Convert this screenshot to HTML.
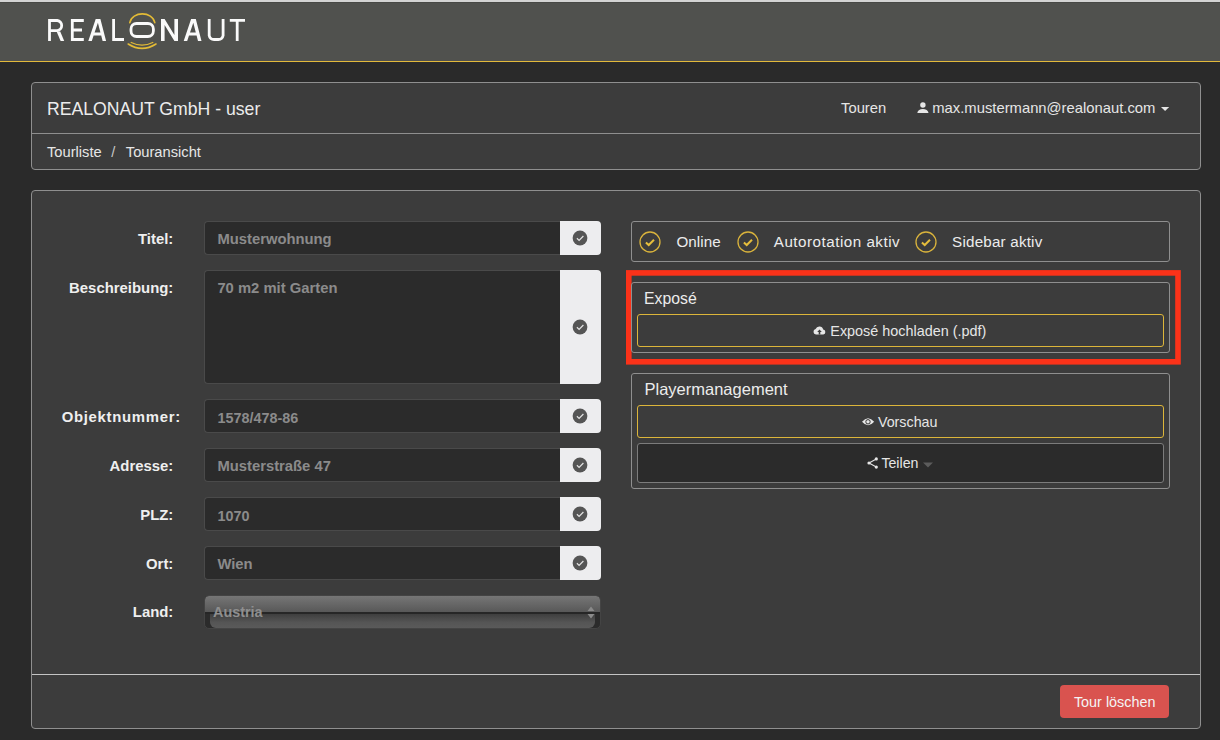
<!DOCTYPE html>
<html><head><meta charset="utf-8">
<style>
html,body{margin:0;padding:0;}
body{width:1220px;height:740px;overflow:hidden;background:#2a2a2a;position:relative;font-family:"Liberation Sans",sans-serif;}
.t{position:absolute;white-space:nowrap;}
.b{position:absolute;box-sizing:border-box;}
svg{position:absolute;overflow:visible;}
</style></head><body>
<div class="b" style="left:0px;top:0px;width:1220px;height:2px;background:#d3d3d3;"></div>
<div class="b" style="left:0px;top:2px;width:1220px;height:59px;background:#50514e;border-top:1px solid #474845;"></div>
<div class="b" style="left:0px;top:61px;width:1220px;height:1px;background:#e2b93b;"></div>
<svg width="1220" height="62" style="left:0;top:0" viewBox="0 0 1220 62">
<g fill="none" stroke="#fafafa" stroke-width="2.8" stroke-linejoin="miter" stroke-linecap="butt">
<path d="M49.5 41V20.5H57.3A5.1 5.1 0 0 1 57.3 30.6H49.5"/>
<path d="M72.3 41V20.5H83.8M72.3 30H82M72.3 39.5H83.8"/>

<path d="M113.6 19V39.5H124"/>
<rect x="131" y="23.5" width="22.4" height="13" rx="5.5" ry="5.5"/>


<path d="M209.2 19V35.5A5 5 0 0 0 214.2 39.5H218A5 5 0 0 0 223.1 35.5V19"/>
<path d="M229.8 20.4H245M237.2 20.4V41"/>
</g>
<g fill="#fafafa" fill-rule="evenodd">
<path d="M161 41V19H164.6L174.4 35.1V19H178V41H174.4L164.6 24.9V41Z"/>
<path d="M56.6 31.6H60.2L64.2 41H60.6Z"/>
<path d="M88.3 41L95.7 19H100.4L106.1 41H102.6L101.2 35.6H93.6L91.8 41ZM94.6 32.6H100.4L97.9 22.85Z"/>
<path transform="translate(95.4 0)" d="M88.3 41L95.7 19H100.4L106.1 41H102.6L101.2 35.6H93.6L91.8 41ZM94.6 32.6H100.4L97.9 22.85Z"/>
</g>
<g fill="none" stroke="#e3bb36" stroke-linecap="round">
<path d="M129.8 22.6C132 11 152.6 11 154.8 22.6" stroke-width="1.6"/>
<path d="M128.2 44Q142 52.8 156 44" stroke-width="1.6"/>
<path d="M131.2 42.5Q142 47.7 152.8 42.5" stroke-width="1.3"/>
</g>
</svg>
<div class="b" style="left:31px;top:82px;width:1170px;height:88px;background:#3c3c3c;border:1px solid #8f8f8f;border-radius:4px;"></div>
<div class="b" style="left:32px;top:133px;width:1168px;height:1px;background:#8f8f8f;"></div>
<div class="t" style="top:99.01px;font-size:19px;line-height:19px;color:#ececec;left:47.2px;transform:scaleX(0.928);transform-origin:0 0;">REALONAUT GmbH - user</div>
<div class="t" style="top:144.55px;font-size:14.7px;line-height:14.7px;color:#e6e6e6;left:47px;">Tourliste</div>
<div class="t" style="top:144.55px;font-size:14.7px;line-height:14.7px;color:#c8c8c8;left:111.3px;">/</div>
<div class="t" style="top:144.55px;font-size:14.7px;line-height:14.7px;color:#e6e6e6;left:125.8px;">Touransicht</div>
<div class="t" style="top:101.47px;font-size:14.8px;line-height:14.8px;color:#e6e6e6;left:841px;">Touren</div>
<svg width="12" height="12" style="left:916.6px;top:102px" viewBox="0 0 12 12"><circle cx="5.9" cy="3" r="2.7" fill="#e6e6e6"/><path d="M0.3 11.1C0.6 8.3 3 7 5.9 7S11.2 8.3 11.5 11.1Z" fill="#e6e6e6"/></svg>
<div class="t" style="top:101.47px;font-size:14.8px;line-height:14.8px;color:#e6e6e6;left:932.3px;">max.mustermann@realonaut.com</div>
<svg width="9" height="5" style="left:1160.9px;top:106.9px" viewBox="0 0 9 5"><path d="M0 0H8.2L4.1 4.1Z" fill="#e6e6e6"/></svg>
<div class="b" style="left:31px;top:190px;width:1170px;height:539px;background:#3c3c3c;border:1px solid #8f8f8f;border-radius:4px;"></div>
<div class="b" style="left:32px;top:674px;width:1168px;height:1px;background:#c4c4c4;"></div>
<div class="t" style="top:232.08px;font-size:14.9px;line-height:14.9px;color:#efefef;font-weight:bold;right:1046.7px;text-align:right;">Titel:</div>
<div class="b" style="left:204px;top:221px;width:367px;height:34px;background:#2b2b2b;border:1px solid #4a4a4a;border-radius:4px 0 0 4px;border-right:none;"></div>
<div class="b" style="left:560px;top:221px;width:41px;height:34px;background:#ededef;border-radius:0 4px 4px 0;"></div>
<svg width="16" height="16" style="left:571.5px;top:229.8px" viewBox="0 0 16 16"><circle cx="8" cy="8" r="7.4" fill="#555"/><path d="M4.9 8.3L7.1 10.4L11.4 6" fill="none" stroke="#e4e4e4" stroke-width="1.2"/></svg>
<div class="t" style="top:232.27px;font-size:14.8px;line-height:14.8px;color:#8b8b8b;font-weight:bold;left:217.4px;">Musterwohnung</div>
<div class="t" style="top:281.08px;font-size:14.9px;line-height:14.9px;color:#efefef;font-weight:bold;right:1046.7px;text-align:right;">Beschreibung:</div>
<div class="b" style="left:204px;top:270px;width:367px;height:114px;background:#2b2b2b;border:1px solid #4a4a4a;border-radius:4px 0 0 4px;border-right:none;"></div>
<div class="b" style="left:560px;top:270px;width:41px;height:114px;background:#ededef;border-radius:0 4px 4px 0;"></div>
<svg width="16" height="16" style="left:571.5px;top:318.8px" viewBox="0 0 16 16"><circle cx="8" cy="8" r="7.4" fill="#555"/><path d="M4.9 8.3L7.1 10.4L11.4 6" fill="none" stroke="#e4e4e4" stroke-width="1.2"/></svg>
<div class="t" style="top:281.27px;font-size:14.8px;line-height:14.8px;color:#8b8b8b;font-weight:bold;left:217.4px;">70 m2 mit Garten</div>
<div class="t" style="top:410.08px;font-size:14.9px;line-height:14.9px;color:#efefef;font-weight:bold;letter-spacing:0.7px;left:61.7px;">Objektnummer:</div>
<div class="b" style="left:204px;top:399px;width:367px;height:34px;background:#2b2b2b;border:1px solid #4a4a4a;border-radius:4px 0 0 4px;border-right:none;"></div>
<div class="b" style="left:560px;top:399px;width:41px;height:34px;background:#ededef;border-radius:0 4px 4px 0;"></div>
<svg width="16" height="16" style="left:571.5px;top:407.8px" viewBox="0 0 16 16"><circle cx="8" cy="8" r="7.4" fill="#555"/><path d="M4.9 8.3L7.1 10.4L11.4 6" fill="none" stroke="#e4e4e4" stroke-width="1.2"/></svg>
<div class="t" style="top:410.61px;font-size:14.4px;line-height:14.4px;color:#8b8b8b;font-weight:bold;left:217.4px;">1578/478-86</div>
<div class="t" style="top:459.08px;font-size:14.9px;line-height:14.9px;color:#efefef;font-weight:bold;right:1046.7px;text-align:right;">Adresse:</div>
<div class="b" style="left:204px;top:448px;width:367px;height:34px;background:#2b2b2b;border:1px solid #4a4a4a;border-radius:4px 0 0 4px;border-right:none;"></div>
<div class="b" style="left:560px;top:448px;width:41px;height:34px;background:#ededef;border-radius:0 4px 4px 0;"></div>
<svg width="16" height="16" style="left:571.5px;top:456.8px" viewBox="0 0 16 16"><circle cx="8" cy="8" r="7.4" fill="#555"/><path d="M4.9 8.3L7.1 10.4L11.4 6" fill="none" stroke="#e4e4e4" stroke-width="1.2"/></svg>
<div class="t" style="top:459.27px;font-size:14.8px;line-height:14.8px;color:#8b8b8b;font-weight:bold;left:217.4px;">Musterstraße 47</div>
<div class="t" style="top:508.08px;font-size:14.9px;line-height:14.9px;color:#efefef;font-weight:bold;right:1046.7px;text-align:right;">PLZ:</div>
<div class="b" style="left:204px;top:497px;width:367px;height:34px;background:#2b2b2b;border:1px solid #4a4a4a;border-radius:4px 0 0 4px;border-right:none;"></div>
<div class="b" style="left:560px;top:497px;width:41px;height:34px;background:#ededef;border-radius:0 4px 4px 0;"></div>
<svg width="16" height="16" style="left:571.5px;top:505.8px" viewBox="0 0 16 16"><circle cx="8" cy="8" r="7.4" fill="#555"/><path d="M4.9 8.3L7.1 10.4L11.4 6" fill="none" stroke="#e4e4e4" stroke-width="1.2"/></svg>
<div class="t" style="top:508.61px;font-size:14.4px;line-height:14.4px;color:#8b8b8b;font-weight:bold;left:217.4px;">1070</div>
<div class="t" style="top:557.08px;font-size:14.9px;line-height:14.9px;color:#efefef;font-weight:bold;right:1046.7px;text-align:right;">Ort:</div>
<div class="b" style="left:204px;top:546px;width:367px;height:34px;background:#2b2b2b;border:1px solid #4a4a4a;border-radius:4px 0 0 4px;border-right:none;"></div>
<div class="b" style="left:560px;top:546px;width:41px;height:34px;background:#ededef;border-radius:0 4px 4px 0;"></div>
<svg width="16" height="16" style="left:571.5px;top:554.8px" viewBox="0 0 16 16"><circle cx="8" cy="8" r="7.4" fill="#555"/><path d="M4.9 8.3L7.1 10.4L11.4 6" fill="none" stroke="#e4e4e4" stroke-width="1.2"/></svg>
<div class="t" style="top:557.27px;font-size:14.8px;line-height:14.8px;color:#8b8b8b;font-weight:bold;left:217.4px;">Wien</div>
<div class="b" style="left:204px;top:595px;width:397px;height:34px;border-radius:5px;background:#2b2b2b;border:1px solid #444;overflow:hidden">
<div class="b" style="left:0;top:0;width:395px;height:16px;background:linear-gradient(#767676,#585858);border-radius:4px 4px 0 0"></div>
<div class="b" style="left:0;top:16px;width:395px;height:2px;background:#262626"></div>
<div class="b" style="left:5px;top:18px;width:385px;height:14px;background:linear-gradient(#3e3e3e,#555 60%,#5a5a5a);border-radius:0 0 6px 6px"></div>
</div>
<svg width="8" height="14" style="left:587px;top:605.5px" viewBox="0 0 8 14"><path d="M4 0.5L7.5 5H0.5Z M0.5 8H7.5L4 12.5Z" fill="#8a8a8a"/></svg>
<div class="t" style="top:605.08px;font-size:14.9px;line-height:14.9px;color:#efefef;font-weight:bold;right:1046.7px;text-align:right;">Land:</div>
<div class="t" style="top:604.81px;font-size:14.4px;line-height:14.4px;color:#8f8f8f;font-weight:bold;left:213px;">Austria</div>
<div class="b" style="left:631px;top:221px;width:539px;height:41px;border:1px solid #8f8f8f;border-radius:3px;"></div>
<svg width="22" height="22" style="left:639px;top:230.5px" viewBox="0 0 22 22"><circle cx="11" cy="11" r="10" fill="none" stroke="#d9b33c" stroke-width="1.3"/><path d="M6.9 11.4L9.7 14L15 8.7" fill="none" stroke="#e5bd3c" stroke-width="2"/></svg>
<div class="t" style="top:233.93px;font-size:15.2px;line-height:15.2px;color:#ececec;letter-spacing:0.1px;left:676.4px;">Online</div>
<svg width="22" height="22" style="left:737px;top:230.5px" viewBox="0 0 22 22"><circle cx="11" cy="11" r="10" fill="none" stroke="#d9b33c" stroke-width="1.3"/><path d="M6.9 11.4L9.7 14L15 8.7" fill="none" stroke="#e5bd3c" stroke-width="2"/></svg>
<div class="t" style="top:233.93px;font-size:15.2px;line-height:15.2px;color:#ececec;letter-spacing:0.5px;left:773.8px;">Autorotation aktiv</div>
<svg width="22" height="22" style="left:915px;top:230.5px" viewBox="0 0 22 22"><circle cx="11" cy="11" r="10" fill="none" stroke="#d9b33c" stroke-width="1.3"/><path d="M6.9 11.4L9.7 14L15 8.7" fill="none" stroke="#e5bd3c" stroke-width="2"/></svg>
<div class="t" style="top:233.93px;font-size:15.2px;line-height:15.2px;color:#ececec;letter-spacing:0.2px;left:952.1px;">Sidebar aktiv</div>
<svg width="1220" height="740" style="left:0;top:0;pointer-events:none"><rect x="628.8" y="272.9" width="549.2" height="88.9" fill="none" stroke="#fb3219" stroke-width="5.6"/></svg>
<div class="b" style="left:631px;top:282px;width:539px;height:71px;border:1px solid #8f8f8f;border-radius:3px;"></div>
<div class="t" style="top:290.92px;font-size:15.8px;line-height:15.8px;color:#ececec;left:644px;">Exposé</div>
<div class="b" style="left:637px;top:314px;width:527px;height:33px;border:1px solid #dcb53a;border-radius:3px;"></div>
<svg width="13" height="9" style="left:813.3px;top:326.4px" viewBox="0 0 13 9"><path d="M3 8.5A2.8 2.8 0 0 1 2.6 3A4 4 0 0 1 10.2 3.4A2.6 2.6 0 0 1 10.3 8.5Z" fill="#e6e6e6"/><path d="M6.5 3.5L4.2 6H5.7V8.5H7.3V6H8.8Z" fill="#3c3c3c"/></svg>
<div class="t" style="top:323.81px;font-size:14.4px;line-height:14.4px;color:#e6e6e6;left:830.3px;">Exposé hochladen (.pdf)</div>
<div class="b" style="left:631px;top:373px;width:539px;height:116px;border:1px solid #8f8f8f;border-radius:3px;"></div>
<div class="t" style="top:380.53px;font-size:16.5px;line-height:16.5px;color:#ececec;left:644.5px;">Playermanagement</div>
<div class="b" style="left:637px;top:405px;width:527px;height:33px;border:1px solid #dcb53a;border-radius:3px;"></div>
<svg width="13" height="8" style="left:861.6px;top:418px" viewBox="0 0 13 8"><path d="M0 3.8Q6 -3.2 12.2 3.8Q6 10.8 0 3.8Z" fill="#e6e6e6"/><circle cx="6" cy="3.8" r="2.2" fill="none" stroke="#333" stroke-width="1"/></svg>
<div class="t" style="top:414.69px;font-size:14.3px;line-height:14.3px;color:#e6e6e6;left:877.9px;">Vorschau</div>
<div class="b" style="left:637px;top:443px;width:527px;height:40px;background:#2b2b2b;border:1px solid #7c7c7c;border-radius:3px;"></div>
<svg width="12" height="12" style="left:866.5px;top:457px" viewBox="0 0 12 12"><g fill="#e6e6e6"><circle cx="9.3" cy="1.9" r="1.6"/><circle cx="2" cy="6" r="1.6"/><circle cx="9.3" cy="10.1" r="1.6"/></g><path d="M9.3 1.9L2 6L9.3 10.1" fill="none" stroke="#e6e6e6" stroke-width="1.1"/></svg>
<div class="t" style="top:455.78px;font-size:14.2px;line-height:14.2px;color:#e6e6e6;left:881.4px;">Teilen</div>
<svg width="10" height="6" style="left:923px;top:461.5px" viewBox="0 0 10 6"><path d="M0 0.5H10L5 5.5Z" fill="#5c5c5c"/></svg>
<div class="b" style="left:1060px;top:685px;width:109px;height:33px;background:#d9534f;border-radius:4px;"></div>
<div class="t" style="top:695.01px;font-size:14.4px;line-height:14.4px;color:#f4f4f4;left:1073.9px;">Tour löschen</div>
</body></html>
